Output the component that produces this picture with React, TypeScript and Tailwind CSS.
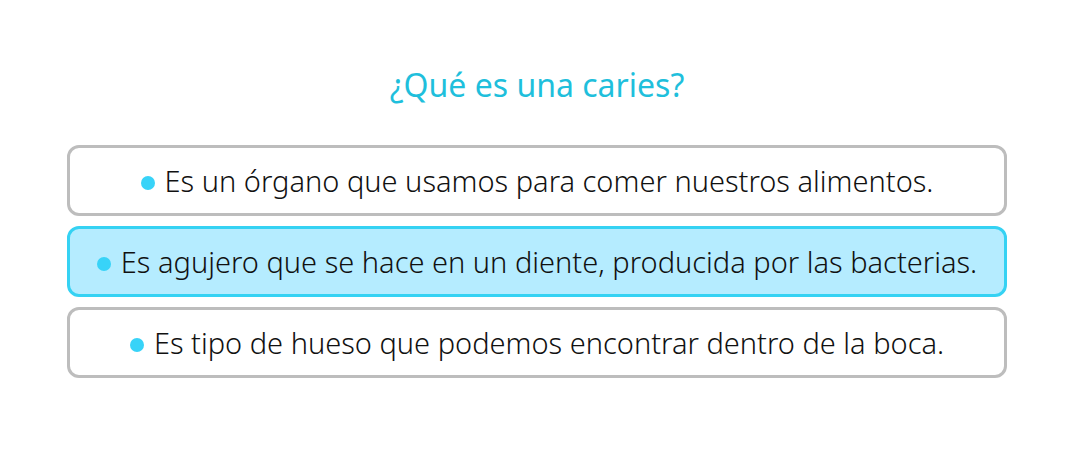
import { useState } from "react";

const answers = [
  "Es un órgano que usamos para comer nuestros alimentos.",
  "Es agujero que se hace en un diente, producida por las bacterias.",
  "Es tipo de hueso que podemos encontrar dentro de la boca.",
];

export default function App() {
  const [selected, setSelected] = useState(1);
  return (
    <main className="bg-white pt-16 pr-[71px] pb-24 pl-[67px] font-['Noto_Sans',sans-serif]">
      <fieldset className="flex min-w-0 flex-col">
        <legend className="w-full pb-10 text-center text-[32px] leading-[41px] text-[#1fbfdc]">
          ¿Qué es una caries?
        </legend>
        <div className="flex flex-col gap-[10px]">
          {answers.map((answer, index) => (
            <label
              key={answer}
              className="flex cursor-pointer items-center justify-center gap-[10px] rounded-xl border-3 border-[#bdbdbd] bg-white px-4 py-3 text-[29px] leading-[41px] font-light text-[#111111] has-checked:border-[#35d2f3] has-checked:bg-[#b5ecff]"
            >
              <input
                type="radio"
                name="answer"
                checked={selected === index}
                onChange={() => setSelected(index)}
                className="mt-1 size-[14px] shrink-0 appearance-none rounded-full bg-[#38d3f8]"
              />
              <span>{answer}</span>
            </label>
          ))}
        </div>
      </fieldset>
    </main>
  );
}
